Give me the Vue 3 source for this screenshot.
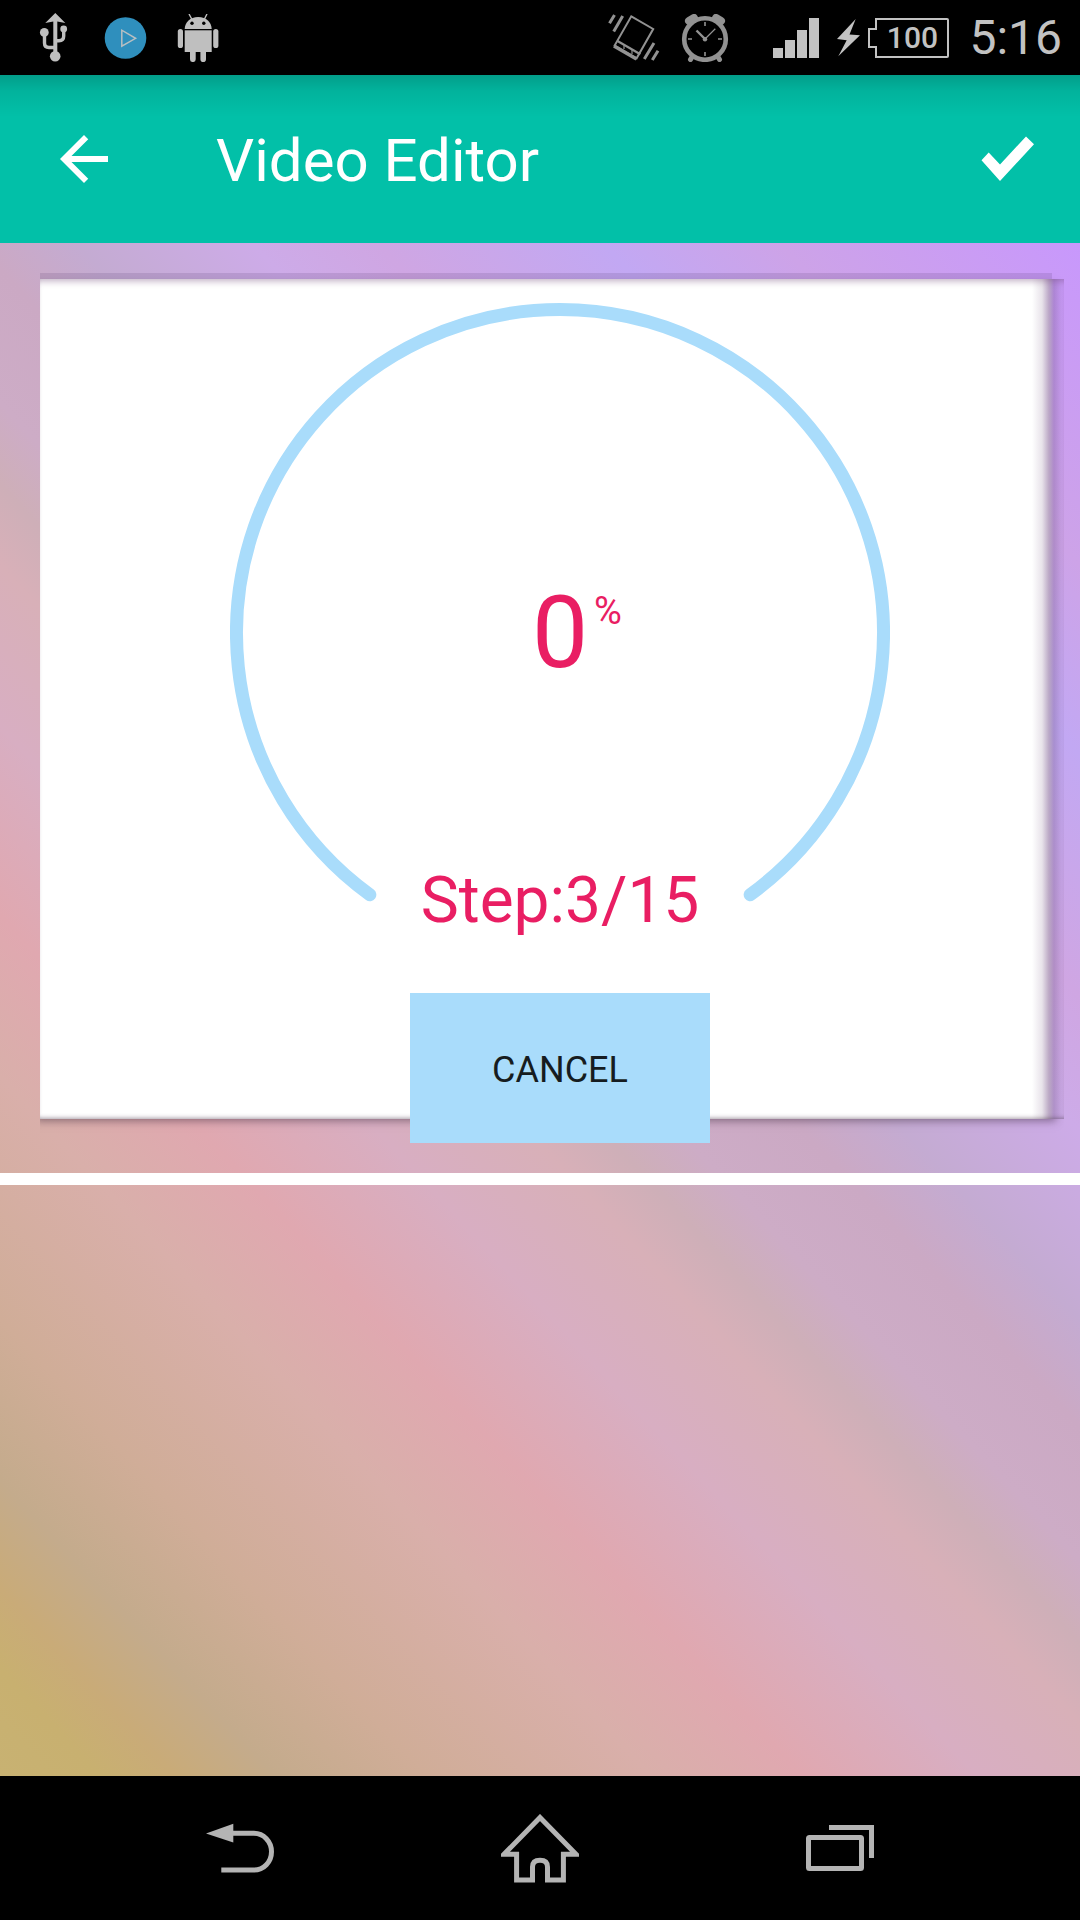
<template>
  <div class="screen">
    <div class="status-bar">
      <div class="status-left">
        <svg class="usb-icon" width="48" height="48" viewBox="0 0 48 48">
          <path d="M25.3 -1L35.3 9L27.3 7.6V38H23.3V7.6L15.3 9Z" fill="#bfbfbf" />
          <path d="M14.5 18V29Q14.5 33.5 19 33.5H25M33.7 15V22Q33.7 26.7 29 26.7H25" fill="none" stroke="#bfbfbf" stroke-width="3.4" />
          <circle cx="25.2" cy="42.3" r="5.3" fill="#bfbfbf" />
          <circle cx="14.3" cy="18.4" r="4.4" fill="#bfbfbf" />
          <circle cx="33.7" cy="15" r="3.4" fill="#bfbfbf" />
        </svg>
        <svg width="48" height="48" viewBox="0 0 48 48">
          <circle cx="23.5" cy="24" r="20.8" fill="#2f8fbd" />
          <path d="M19.8 16.2V32.2L33.6 24.3Z" fill="none" stroke="#b8bfc2" stroke-width="1.5" />
        </svg>
        <svg width="48" height="48" viewBox="0 0 48 48">
          <path d="M10.7 15C11 8 16 3 24.2 3S37.4 8 37.7 15Z" fill="#bfbfbf" />
          <path d="M15 0L18 5.5M33 0L30.2 5.5" stroke="#bfbfbf" stroke-width="1.4" />
          <circle cx="18" cy="9.3" r="1.7" fill="#000" />
          <circle cx="29.8" cy="9.3" r="1.7" fill="#000" />
          <rect x="10.7" y="16.3" width="27" height="21.7" fill="#bfbfbf" />
          <rect x="3.8" y="15" width="5.2" height="19" rx="2.6" fill="#bfbfbf" />
          <rect x="39.2" y="15" width="5.2" height="19" rx="2.6" fill="#bfbfbf" />
          <path d="M16 36H21.7V45.2A2.8 2.8 0 0 1 16 45.2ZM26.4 36H32V45.2A2.8 2.8 0 0 1 26.4 45.2Z" fill="#bfbfbf" />
        </svg>
      </div>

      <div class="status-right">
        <svg class="vibrate-icon" width="54" height="48" viewBox="0 0 54 48">
          <g fill="none" stroke="#929292">
            <path d="M24.3 2.3L46.2 15L29.6 44.3L7.6 31.6Z" stroke-width="2" />
            <path d="M10.5 27L33.3 40.3" stroke-width="2.2" />
            <path d="M7 32L29.5 45" stroke-width="3.6" />
            <path d="M17 31.5V35M25 36V40" stroke-width="1.2" />
            <path d="M7.5 1L2.5 9.3M15.7 2L6.7 17.5M47 29L37.3 45M51 36.7L45.3 46" stroke-width="3" />
          </g>
        </svg>
        <svg class="alarm-icon" width="48" height="48" viewBox="0 0 48 48">
          <g fill="none" stroke="#929292">
            <circle cx="24" cy="25" r="20.8" stroke-width="4.6" />
            <path d="M8 7L13 4M35 4L40 7" stroke-width="8" stroke-linecap="round" />
            <path d="M11 43L9.5 45.5M37 43L38.5 45.5" stroke-width="5" stroke-linecap="round" />
            <path d="M24 8V12M24 38V42M7 25H11M37 25H41" stroke-width="1.6" />
            <path d="M15.5 16.5L24 25" stroke-width="2.4" />
            <path d="M24 25L34.3 14.8" stroke-width="1.2" />
          </g>
          <circle cx="24" cy="25.3" r="2.2" fill="#929292" />
        </svg>
        <svg class="signal-icon" width="46" height="40" viewBox="0 0 46 40">
          <rect
            v-for="(height, index) in signalBars"
            :key="index"
            :x="index * 12"
            :y="40 - height"
            width="10"
            :height="height"
            fill="#c2c2c2"
          />
        </svg>
        <svg class="bolt-icon" width="24" height="38" viewBox="0 0 24 38">
          <path d="M18.7 0L0 20L9.7 21.3L1.3 37.3L23 16.2L12.5 15.4Z" fill="#c2c2c2" />
        </svg>
        <div class="battery">
          <svg width="82" height="40" viewBox="0 0 82 40">
            <path d="M8 1H79Q80 1 80 2V38Q80 39 79 39H8V29H1V11H8Z" fill="none" stroke="#c2c2c2" stroke-width="2" />
          </svg>
          <span class="battery-level">{{ battery }}</span>
        </div>
        <span class="clock">{{ time }}</span>
      </div>
    </div>

    <header class="toolbar">
      <button class="icon-btn" aria-label="Navigate up">
        <svg width="72" height="72" viewBox="0 0 24 24">
          <path d="M20 11H7.83l5.59-5.59L12 4l-8 8 8 8 1.41-1.41L7.83 13H20v-2z" fill="#fff" />
        </svg>
      </button>
      <h1>{{ title }}</h1>
      <button class="icon-btn" aria-label="Done">
        <svg width="54" height="46" viewBox="0 0 54 46">
          <path d="M0.5 24.3L7.7 16.6L19 28.5L45 0.5L53 8.2L19 45Z" fill="#fff" />
        </svg>
      </button>
    </header>

    <main class="content">
      <section class="preview">
        <div class="panel">
          <div class="gauge">
            <svg class="gauge-arc" width="660" height="660" viewBox="0 0 660 660">
              <path :d="arcPath" fill="none" stroke="#a9dcfb" stroke-width="13" stroke-linecap="round" />
            </svg>
            <div class="gauge-value">
              {{ progress }}<span class="gauge-suffix">%</span>
            </div>
            <div class="gauge-step">Step:{{ step }}/{{ totalSteps }}</div>
          </div>
          <button class="cancel-btn" @click="cancel">CANCEL</button>
        </div>
      </section>
      <div class="divider"></div>
    </main>

    <nav class="nav-bar">
      <button class="nav-btn" aria-label="Back">
        <svg width="68" height="50" viewBox="0 0 68 50">
          <path d="M0 10.5L27.3 0.7V19.5Z" fill="#b4b4b4" />
          <path d="M27 10.3H48A17.5 18.4 0 0 1 48 47.1H15.3" fill="none" stroke="#b4b4b4" stroke-width="5" />
        </svg>
      </button>
      <button class="nav-btn" aria-label="Home">
        <svg width="78" height="69" viewBox="0 0 78 69">
          <path
            d="M39 3.5L75 40.3H62.4V66H46.5V53Q46.5 46.3 39 46.3T31.5 53V66H15.6V40.3H3Z"
            fill="none"
            stroke="#b4b4b4"
            stroke-width="5"
          />
        </svg>
      </button>
      <button class="nav-btn" aria-label="Recent apps">
        <svg width="68" height="46" viewBox="0 0 68 46">
          <path d="M23 2.5H65.5V33" fill="none" stroke="#b4b4b4" stroke-width="5" />
          <rect x="2.5" y="12.5" width="53" height="31" rx="1" fill="none" stroke="#b4b4b4" stroke-width="5" />
        </svg>
      </button>
    </nav>
  </div>
</template>

<script setup>
import { ref, computed } from 'vue'

const title = ref('Video Editor')
const time = ref('5:16')
const battery = ref(100)
const signalBars = [10, 18, 28, 40]

const progress = ref(0)
const step = ref(3)
const totalSteps = ref(15)

// Open arc, the gap is at the bottom
const arcPath = computed(() => {
  const center = 330
  const radius = 323.5
  const half = (36 * Math.PI) / 180
  const dx = radius * Math.sin(half)
  const y = center + radius * Math.cos(half)
  return `M${center - dx} ${y}A${radius} ${radius} 0 1 1 ${center + dx} ${y}`
})

const cancel = () => {
  progress.value = 0
}
</script>

<style>
body {
  margin: 0;
  background: #000;
}
</style>

<style scoped>
.screen {
  min-height: 100vh;
  display: flex;
  flex-direction: column;
  font-family: Roboto, "Noto Sans", sans-serif;
}

button {
  border: none;
  padding: 0;
  background: none;
  font-family: inherit;
  cursor: pointer;
}

svg {
  display: block;
}

.status-bar {
  height: 75px;
  padding: 0 18px 0 30px;
  display: flex;
  justify-content: space-between;
  align-items: center;
  background: #000;
  color: #c2c2c2;
}

.status-left {
  display: flex;
  gap: 24px;
}

.usb-icon {
  overflow: visible;
}

.status-right {
  display: flex;
  align-items: center;
}

.vibrate-icon {
  margin-right: 20px;
}

.alarm-icon {
  margin-right: 44px;
}

.signal-icon {
  margin-right: 18px;
}

.bolt-icon {
  margin-right: 7px;
}

.battery {
  display: grid;
  align-items: center;
  margin-right: 19px;
}

.battery > * {
  grid-area: 1 / 1;
}

.battery-level {
  padding-left: 6px;
  text-align: center;
  font-size: 30px;
  font-weight: 500;
  line-height: 36px;
}

.clock {
  font-size: 48px;
  line-height: 56px;
}

.toolbar {
  height: 168px;
  padding: 0 45px 0 48px;
  display: flex;
  align-items: center;
  background: linear-gradient(rgba(0, 0, 0, 0.18), rgba(0, 0, 0, 0.07) 16px, rgba(0, 0, 0, 0) 42px) #02c0a8;
}

.toolbar h1 {
  flex: 1;
  margin: 0 0 0 96px;
  padding-top: 4px;
  color: #fff;
  font-size: 60px;
  font-weight: 400;
  line-height: 72px;
}

.content {
  flex: 1;
  background: linear-gradient(
    47deg,
    #c8b272 0%,
    #c8b070 4%,
    #c9ab78 7%,
    #c4ab8c 11%,
    #d0ad98 17%,
    #d9afaa 26%,
    #e0a8b0 32%,
    #d8aec2 39%,
    #d8b0b8 45%,
    #ceafb8 48%,
    #cdacc6 51%,
    #cba9c4 56%,
    #c4abd2 60%,
    #cdabe8 67%,
    #cfa6e3 72%,
    #c2a8f3 81%,
    #cda3e8 88%,
    #c898fc 100%
  );
}

.preview {
  padding: 30px 0 30px 40px;
}

.panel {
  position: relative;
  padding-top: 30px;
  display: flex;
  flex-direction: column;
  align-items: center;
  gap: 30px;
}

/* White sheet, cut straight on the left and fading out on the right */
.panel::before {
  content: "";
  position: absolute;
  top: 6px;
  right: 16px;
  bottom: 24px;
  left: 0;
  background: linear-gradient(
    to left,
    rgba(90, 70, 110, 0) 0,
    rgba(90, 70, 110, 0.26) 10px,
    rgba(184, 168, 190, 0.85) 15px,
    rgba(232, 227, 234, 1) 22px,
    #fff 32px
  );
  box-shadow:
    -12px -6px 0 rgba(90, 60, 110, 0.16),
    -6px 4px 8px -2px rgba(60, 40, 60, 0.5),
    inset 0 7px 7px -5px rgba(110, 70, 120, 0.45),
    inset 0 -4px 4px -3px rgba(80, 60, 80, 0.5);
  clip-path: inset(-6px 0 -14px 0);
}

.gauge {
  position: relative;
  display: grid;
  justify-items: center;
}

.gauge > * {
  grid-area: 1 / 1;
}

.gauge-value {
  align-self: center;
  position: relative;
  color: #e91e63;
  font-size: 100px;
  line-height: 116px;
}

.gauge-suffix {
  position: absolute;
  top: 14px;
  left: 100%;
  padding-left: 6px;
  font-size: 38px;
  line-height: 44px;
}

.gauge-step {
  align-self: end;
  padding-bottom: 24px;
  color: #e91e63;
  font-size: 64px;
  line-height: 76px;
}

.cancel-btn {
  position: relative;
  width: 300px;
  height: 150px;
  padding-top: 4px;
  background: #a9dcfb;
  color: #161c20;
  font-size: 36px;
}

.divider {
  height: 12px;
  background: #fff;
}

.nav-bar {
  height: 144px;
  padding: 0 90px;
  display: flex;
  background: #000;
}

.nav-btn {
  flex: 1;
  display: flex;
  justify-content: center;
  align-items: center;
}
</style>
